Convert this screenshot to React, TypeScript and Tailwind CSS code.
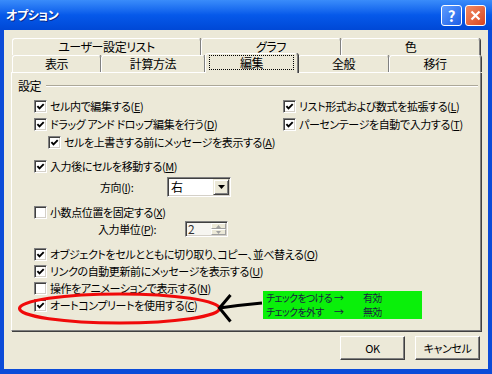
import React from 'react';

function Box({ checked = false }: { checked?: boolean }) {
  return (
    <span className="flex h-[13px] w-[13px] shrink-0 items-center justify-center border border-b-white border-l-[#808080] border-r-white border-t-[#808080] bg-white shadow-[inset_1px_1px_0_#404040,inset_-1px_-1px_0_#d4d0c8]">
      {checked && (
        <svg width="9" height="9" viewBox="0 0 9 9">
          <polyline points="1.4,4.2 3.5,6.4 7.7,2.1" fill="none" stroke="#000" strokeWidth="1.9" />
        </svg>
      )}
    </span>
  );
}

function Check({
  text,
  k,
  checked = false,
  className = '',
}: {
  text: string;
  k: string;
  checked?: boolean;
  className?: string;
}) {
  return (
    <div className={`flex items-center gap-[3px] whitespace-nowrap ${className}`}>
      <Box checked={checked} />
      <span className="leading-none">
        {text}(<u>{k}</u>)
      </span>
    </div>
  );
}

function Tab({ label, className = '' }: { label: string; className?: string }) {
  return (
    <div
      className={`flex h-full items-center justify-center rounded-t-[3px] border-l border-r border-t border-l-white border-r-[#808080] border-t-white text-[12px] leading-none shadow-[1px_0_0_#404040] ${className}`}
    >
      {label}
    </div>
  );
}

export default function App() {
  return (
    <div className="relative flex h-[374px] w-[492px] flex-col overflow-hidden bg-[#0B4BD8] font-['Noto_Sans_CJK_JP',sans-serif] text-[11px] tracking-[-0.4px] text-black [font-feature-settings:'palt']">
      {/* Title bar */}
      <div className="flex h-[30px] shrink-0 items-center bg-gradient-to-b from-[#3A8CFA] via-[#0659EA] to-[#0048D6] pl-[6px] pr-[6px]">
        <span className="text-[12px] font-bold leading-none text-white [text-shadow:1px_1px_0_#0a2a8a]">
          オプション
        </span>
        <div className="ml-auto flex items-center gap-[3px]">
          <div className="flex h-[21px] w-[21px] items-center justify-center rounded-[3px] border border-white bg-gradient-to-br from-[#5E9CFF] to-[#1C5CE6] text-[15px] font-bold leading-none text-white">
            ?
          </div>
          <div className="flex h-[21px] w-[21px] items-center justify-center rounded-[3px] border border-white bg-gradient-to-br from-[#F08A62] to-[#D9431C]">
            <svg width="11" height="11" viewBox="0 0 11 11">
              <path d="M1.5 1.5 L9.5 9.5 M9.5 1.5 L1.5 9.5" stroke="#fff" strokeWidth="2.2" />
            </svg>
          </div>
        </div>
      </div>

      {/* Dialog body */}
      <div className="mx-[4px] flex h-[339px] flex-col bg-[#ECE9D8]">
        {/* Tabs */}
        <div className="pl-[8px] pt-[8px]">
          <div className="flex h-[17px]">
            <Tab label="ユーザー設定リスト" className="w-[189px]" />
            <Tab label="グラフ" className="w-[140px]" />
            <Tab label="色" className="w-[139px]" />
          </div>
          <div className="flex h-[17px] items-end">
            <Tab label="表示" className="w-[89px]" />
            <Tab label="計算方法" className="w-[104px]" />
            <div className="relative z-10 -mb-px flex h-[20px] w-[93px] shrink-0 items-start justify-center self-end rounded-t-[3px] border-l border-r border-t border-l-white border-r-[#808080] border-t-white bg-[#ECE9D8] pt-[1px] text-[12px] shadow-[1px_0_0_#404040]">
              <span className="flex h-[15px] w-[85px] items-center justify-center border border-dotted border-black leading-none">
                編集
              </span>
            </div>
            <Tab label="全般" className="w-[91px]" />
            <Tab label="移行" className="w-[92px]" />
          </div>
        </div>

        {/* Panel */}
        <div className="ml-[7px] h-[259px] w-[470px] shrink-0 border border-b-[#808080] border-l-white border-r-[#808080] border-t-white shadow-[1px_1px_0_#404040]">
          <div className="mt-[5px] flex h-[16px] items-center pl-[6px] pr-[2px]">
            <span className="text-[12px] leading-none">設定</span>
            <div className="ml-[5px] h-[2px] flex-1 border-b border-t border-b-white border-t-[#ACA899]" />
          </div>

          <div className="mt-[3px] flex pl-[22px]">
            <div className="w-[249px] shrink-0">
              <Check text="セル内で編集する" k="E" checked className="h-[18px]" />
              <Check text="ドラッグ アンド ドロップ編集を行う" k="D" checked className="h-[18px]" />
              <Check text="セルを上書きする前にメッセージを表示する" k="A" checked className="h-[18px] pl-[14px]" />
            </div>
            <div>
              <Check text="リスト形式および数式を拡張する" k="L" checked className="h-[18px]" />
              <Check text="パーセンテージを自動で入力する" k="T" checked className="h-[18px]" />
            </div>
          </div>

          <div className="pl-[22px]">
            <Check text="入力後にセルを移動する" k="M" checked className="mt-[6px] h-[18px]" />
            <div className="mt-[2px] flex h-[20px] items-center">
              <span className="ml-[66px] w-[67px] leading-none">
                方向(<u>I</u>):
              </span>
              <div className="flex h-[20px] w-[64px] items-center border border-b-white border-l-[#808080] border-r-white border-t-[#808080] bg-white shadow-[inset_1px_1px_0_#404040,inset_-1px_-1px_0_#d4d0c8]">
                <span className="ml-[3px] flex-1 text-[12px] leading-none">右</span>
                <div className="mr-[1px] flex h-[16px] w-[16px] items-center justify-center border border-b-[#404040] border-l-[#ECE9D8] border-r-[#404040] border-t-[#ECE9D8] bg-[#ECE9D8] shadow-[inset_1px_1px_0_#fff,inset_-1px_-1px_0_#808080]">
                  <svg width="7" height="4" viewBox="0 0 7 4">
                    <path d="M0 0 H7 L3.5 4 Z" fill="#000" />
                  </svg>
                </div>
              </div>
            </div>

            <Check text="小数点位置を固定する" k="X" className="mt-[6px] h-[18px]" />
            <div className="flex h-[16px] items-center">
              <span className="ml-[64px] w-[87px] leading-none">
                入力単位(<u>P</u>):
              </span>
              <div className="flex h-[16px] w-[43px] items-center border border-b-white border-l-[#808080] border-r-white border-t-[#808080] bg-[#F6F5F0] shadow-[inset_1px_1px_0_#404040,inset_-1px_-1px_0_#d4d0c8]">
                <span className="ml-[2px] flex-1 text-[12px] leading-none text-[#333]">2</span>
                <div className="mr-[1px] flex h-[12px] w-[15px] flex-col">
                  <div className="flex flex-1 items-center justify-center border border-b-[#A0A0A0] border-l-white border-r-[#A0A0A0] border-t-white bg-[#ECE9D8]">
                    <svg width="5" height="3" viewBox="0 0 5 3">
                      <path d="M0 3 H5 L2.5 0 Z" fill="#A0A0A0" />
                    </svg>
                  </div>
                  <div className="flex flex-1 items-center justify-center border border-b-[#A0A0A0] border-l-white border-r-[#A0A0A0] border-t-white bg-[#ECE9D8]">
                    <svg width="5" height="3" viewBox="0 0 5 3">
                      <path d="M0 0 H5 L2.5 3 Z" fill="#A0A0A0" />
                    </svg>
                  </div>
                </div>
              </div>
            </div>

            <Check text="オブジェクトをセルとともに切り取り、コピー、並べ替える" k="O" checked className="mt-[9px] h-[17px]" />
            <Check text="リンクの自動更新前にメッセージを表示する" k="U" checked className="h-[17px]" />
            <Check text="操作をアニメーションで表示する" k="N" className="h-[17px]" />
            <Check text="オートコンプリートを使用する" k="C" checked className="h-[17px]" />
          </div>
        </div>

        {/* Buttons */}
        <div className="mt-[5px] flex justify-end gap-[10px] pr-[8px]">
          <button className="flex h-[24px] w-[65px] items-center justify-center border border-b-[#404040] border-l-white border-r-[#404040] border-t-white bg-[#ECE9D8] leading-none shadow-[inset_-1px_-1px_0_#808080]">
            OK
          </button>
          <button className="flex h-[24px] w-[65px] items-center justify-center border border-b-[#404040] border-l-white border-r-[#404040] border-t-white bg-[#ECE9D8] leading-none shadow-[inset_-1px_-1px_0_#808080]">
            キャンセル
          </button>
        </div>
      </div>

      {/* Annotation: red ellipse and arrow */}
      <svg className="pointer-events-none absolute left-0 top-0" width="492" height="374" viewBox="0 0 492 374">
        <ellipse cx="119.5" cy="308.5" rx="100" ry="14.5" fill="none" stroke="#F00A0A" strokeWidth="3.2" />
        <path d="M230.5 295 L219.5 308 L230.5 321.5 M219.5 308 Q240 305 262 303" fill="none" stroke="#000" strokeWidth="3" />
      </svg>

      {/* Annotation: green note */}
      <div className="absolute left-[263px] top-[291px] flex h-[28px] w-[159px] flex-col justify-center whitespace-nowrap bg-[#0AF00A] pl-[3px] text-[10px] leading-[14px] tracking-[-0.7px] text-[#1a1a40]">
        <div className="grid grid-cols-[68px_29px_auto]">
          <span>チェックをつける</span>
          <span>→</span>
          <span>有効</span>
        </div>
        <div className="grid grid-cols-[68px_29px_auto]">
          <span>チェックを外す</span>
          <span>→</span>
          <span>無効</span>
        </div>
      </div>
    </div>
  );
}
